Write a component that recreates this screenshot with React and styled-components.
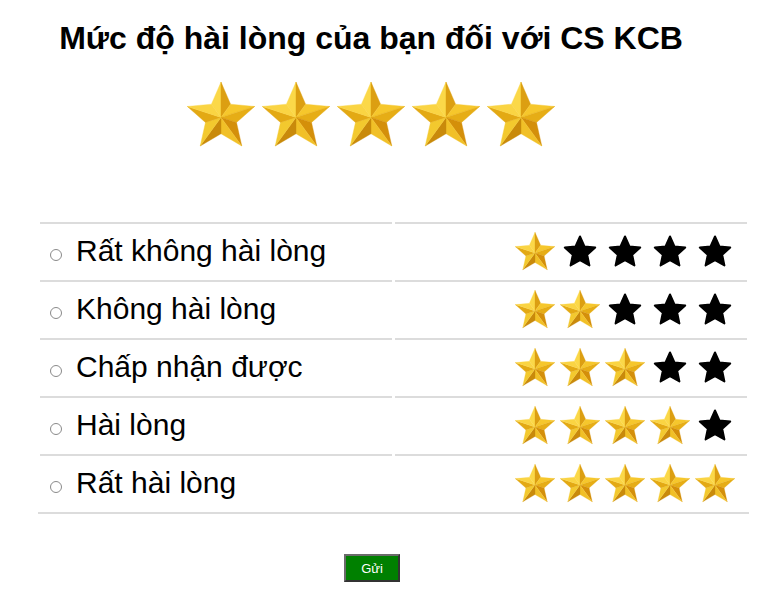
import styled, { createGlobalStyle } from "styled-components";

const GlobalStyle = createGlobalStyle`
    body {
        margin: 0;
        background: #fff;
        font-family: "Liberation Sans", Arial, sans-serif;
        color: #000;
    }
`;

const Levels = [
    { id: "1", label: "Rất không hài lòng", value: 1 },
    { id: "2", label: "Không hài lòng", value: 2 },
    { id: "3", label: "Chấp nhận được", value: 3 },
    { id: "4", label: "Hài lòng", value: 4 },
    { id: "5", label: "Rất hài lòng", value: 5 },
];

// 10 points, outer/inner alternating, starting at the top point
const starPoints = (cx, cy, R, r) =>
    Array.from({ length: 10 }, (_, i) => {
        const a = ((-90 + i * 36) * Math.PI) / 180;
        const rad = i % 2 === 0 ? R : r;
        return [cx + rad * Math.cos(a), cy + rad * Math.sin(a)];
    });

// facet colours: [side toward previous notch, side toward next notch]
const facetColors = [
    ["#fbd848", "#dc9f12"],
    ["#f6c72c", "#e6ad16"],
    ["#d48f0a", "#f1c027"],
    ["#c98a0b", "#f3c92e"],
    ["#e3a914", "#fad443"],
];

const GoldStar = ({ size }) => {
    const cx = 50;
    const cy = 55;
    const pts = starPoints(cx, cy, 52, 24);
    const p = (pt) => `${pt[0]},${pt[1]}`;
    return (
        <svg width={size} height={size} viewBox="0 0 100 100" style={{ overflow: "visible" }}>
            {facetColors.map((pair, i) => {
                const outer = pts[2 * i];
                const prev = pts[(2 * i + 9) % 10];
                const next = pts[2 * i + 1];
                return (
                    <g key={i}>
                        <polygon points={`${cx},${cy} ${p(outer)} ${p(prev)}`} fill={pair[0]} stroke={pair[0]} strokeWidth="0.6" />
                        <polygon points={`${cx},${cy} ${p(outer)} ${p(next)}`} fill={pair[1]} stroke={pair[1]} strokeWidth="0.6" />
                    </g>
                );
            })}
        </svg>
    );
};

const BlackStar = ({ size }) => {
    const pts = starPoints(50, 53.8, 40, 19).map((pt) => pt.join(",")).join(" ");
    return (
        <svg width={size} height={size} viewBox="0 0 100 100" style={{ overflow: "visible" }}>
            <polygon points={pts} fill="#000" stroke="#000" strokeWidth="5" strokeLinejoin="round" />
        </svg>
    );
};

const App = () => {
    return (
        <Page>
            <GlobalStyle />
            <Header>
                <Title>Mức độ hài lòng của bạn đối với CS KCB</Title>
                <BigStars>
                    {[1, 2, 3, 4, 5].map((n) => (
                        <GoldStar key={n} size={68} />
                    ))}
                </BigStars>
            </Header>
            <RatingTable>
                {Levels.map((level) => (
                    <RatingRow key={level.id}>
                        <LabelCell>
                            <Radio type="radio" name="rating" value={level.value} />
                            <LabelText>{level.label}</LabelText>
                        </LabelCell>
                        <StarCell>
                            {[1, 2, 3, 4, 5].map((n) =>
                                n <= level.value ? (
                                    <GoldStar key={n} size={40} />
                                ) : (
                                    <BlackStar key={n} size={40} />
                                )
                            )}
                        </StarCell>
                    </RatingRow>
                ))}
            </RatingTable>
            <Footer>
                <SendButton>Gửi</SendButton>
            </Footer>
        </Page>
    );
};

export default App;

const Page = styled.div`
    width: 768px;
    height: 599px;
    overflow: hidden;
`;

const Header = styled.div`
    width: 742px;
    display: flex;
    flex-direction: column;
    align-items: center;
    padding-top: 20px;
`;

const Title = styled.h1`
    margin: 0;
    font-size: 32px;
    font-weight: bold;
    line-height: 37px;
`;

const BigStars = styled.div`
    display: flex;
    gap: 7px;
    margin-top: 23px;
    height: 68px;
`;

const RatingTable = styled.div`
    width: 711px;
    margin: 72px 0 0 38px;
    padding: 2px;
    box-sizing: border-box;
    border-bottom: 2px solid #dcdcdc;
    display: flex;
    flex-direction: column;
    gap: 2px;
`;

const RatingRow = styled.div`
    display: grid;
    grid-template-columns: 352px 1fr;
    column-gap: 3px;
`;

const Cell = styled.div`
    height: 56px;
    box-sizing: border-box;
    border-top: 2px solid #dcdcdc;
    display: flex;
    align-items: center;
`;

const LabelCell = styled(Cell)`
    padding-left: 10px;
`;

const Radio = styled.input`
    appearance: none;
    width: 12px;
    height: 12px;
    margin: 8px 14px 0 0;
    border: 1px solid #8a8a8a;
    border-radius: 50%;
    background: #fff;
    box-sizing: border-box;
`;

const LabelText = styled.span`
    font-size: 30px;
    line-height: 34px;
`;

const StarCell = styled(Cell)`
    justify-content: flex-end;
    gap: 5px;
    padding-right: 12px;
`;

const Footer = styled.div`
    width: 744px;
    display: flex;
    justify-content: center;
    margin-top: 40px;
`;

const SendButton = styled.button`
    width: 56px;
    height: 28px;
    background: #008000;
    color: #fff;
    font-family: "Liberation Sans", Arial, sans-serif;
    font-size: 13px;
    border: 2px solid;
    border-color: #6b6b6b #333 #333 #6b6b6b;
    padding: 0;
`;
